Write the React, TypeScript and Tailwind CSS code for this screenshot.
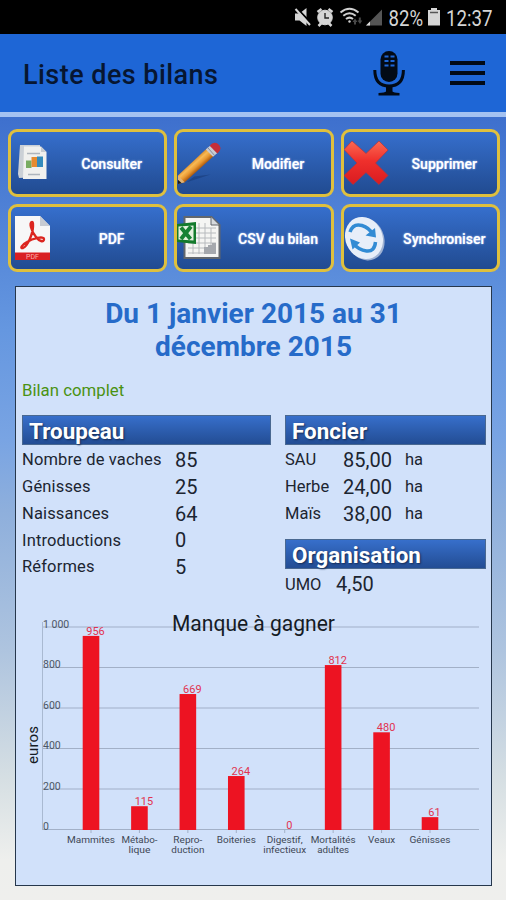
import type { ReactNode } from "react";

const herd = [
  { label: "Nombre de vaches", value: "85" },
  { label: "Génisses", value: "25" },
  { label: "Naissances", value: "64" },
  { label: "Introductions", value: "0" },
  { label: "Réformes", value: "5" },
];

const land = [
  { label: "SAU", value: "85,00" },
  { label: "Herbe", value: "24,00" },
  { label: "Maïs", value: "38,00" },
];

const losses = [
  { lines: ["Mammites"], widths: [48], value: 956 },
  { lines: ["Métabo-", "lique"], widths: [36, 22], value: 115 },
  { lines: ["Repro-", "duction"], widths: [29, 33], value: 669 },
  { lines: ["Boiteries"], widths: [39], value: 264 },
  { lines: ["Digestif,", "infectieux"], widths: [36, 43], value: 0 },
  { lines: ["Mortalités", "adultes"], widths: [45, 32], value: 812 },
  { lines: ["Veaux"], widths: [27], value: 480 },
  { lines: ["Génisses"], widths: [41], value: 61 },
];

const ticks = [1000, 800, 600, 400, 200, 0];

function StatusBar() {
  return (
    <div className="h-[34px] shrink-0 bg-black flex items-center justify-end">
      <svg width="212" height="34" viewBox="294 0 212 34">
        <path d="M295 13.500h4.500l7-5.500v18l-7-5.500H295z" fill="#d5d5d5" />
        <path d="M297 8.500l15 15.500" stroke="#000" strokeWidth="2" />
        <path d="M295.500 9l14.500 16" stroke="#d5d5d5" strokeWidth="2" />
        <g stroke="#d5d5d5" fill="none">
          <circle cx="325" cy="17.5" r="7.3" fill="#d5d5d5" />
          <path d="M317.500 12l4-3M332.500 12l-4-3M318.500 26l3-3M331.500 26l-3-3" strokeWidth="2.5" />
          <path d="M325 13v5h4" stroke="#222" strokeWidth="1.4" />
        </g>
        <g stroke="#d0d0d0" fill="none" strokeWidth="2">
          <path d="M340.500 12.500q9-7.500 18 0M343.300 15.800q6.200-5 12.400 0M346 19q3.500-2.800 7 0" />
          <circle cx="349.500" cy="21.500" r="1.200" fill="#d0d0d0" stroke="none" />
        </g>
        <path d="M352.500 22l2.500-3.500 2.500 3.500h-1.500v2.500h-2V22zM357.500 20.500h1.300V17.500h2v3h1.500L360 24z" fill="#484848" />
        <path d="M382 9.500V25.500H366z" fill="#555" />
        <path d="M370 21.500v4h-4z" fill="#ddd" />
        <text x="388.500" y="25.500" fontSize="22.5" fill="#d5d5d5" textLength="34.500" lengthAdjust="spacingAndGlyphs">
          82%
        </text>
        <path d="M431 8h6v2h3v15.500h-12V10h3z" fill="#d5d5d5" />
        <path d="M430 12.500h8" stroke="#555" strokeWidth="1.500" />
        <text x="446" y="25.500" fontSize="22.5" fill="#d5d5d5" textLength="46.500" lengthAdjust="spacingAndGlyphs">
          12:37
        </text>
      </svg>
    </div>
  );
}

function MicIcon() {
  return (
    <svg width="34" height="48" viewBox="0 0 34 48">
      <rect x="8.500" y="2" width="17" height="31" rx="8.500" fill="#020a16" />
      <path d="M12.500 7.500h4M18.500 7.500h4M12.500 12h4M18.500 12h4M12.500 16.500h4M18.500 16.500h4" stroke="#1e66d6" strokeWidth="1.800" />
      <path d="M2.800 21q0 16 14.300 16t14.300-16" fill="none" stroke="#020a16" strokeWidth="3" />
      <path d="M14 37h6.500v5.500q1 1 7 1.500v2.500h-21V44q6.500-.5 7.500-1.500z" fill="#020a16" />
    </svg>
  );
}

function ReportIcon() {
  return (
    <svg width="38" height="48" viewBox="0 0 38 48">
      <path d="M9 6h20v4l-3 28-18 1-1-4z" fill="#cbd0d6" />
      <path d="M13 7.500h17l5.500 5.500v27H12z" fill="#f0f0ee" />
      <path d="M30 7.500l5.500 5.500H30z" fill="#c7cbd0" />
      <path d="M16 14.500h13M17 35.500h12" stroke="#aeb5bd" strokeWidth="1.300" />
      <path d="M15 21.500h5.500V29H15z" fill="#78ac61" />
      <path d="M20.500 18h6v10h-6z" fill="#e68b30" />
      <path d="M26 17.500h6V28h-6z" fill="#348bbc" />
    </svg>
  );
}

function PencilIcon() {
  return (
    <svg width="50" height="50" viewBox="0 0 50 50">
      <defs>
        <linearGradient id="pencil" gradientUnits="userSpaceOnUse" x1="16" y1="22" x2="24" y2="31">
          <stop offset="0" stopColor="#d48325" />
          <stop offset=".35" stopColor="#f8ba55" />
          <stop offset=".65" stopColor="#e89832" />
          <stop offset="1" stopColor="#a9560c" />
        </linearGradient>
      </defs>
      <path d="M10 45l25-8-17 2z" fill="#173975" opacity=".55" />
      <path d="M1 38L31 10l7 8L8 45l-7 2z" fill="url(#pencil)" />
      <path d="M1 38l7 7-7 2z" fill="#dfb477" />
      <path d="M1 42.500l4 3.500-4 1z" fill="#17191f" />
      <path d="M30 11l5-4.500 7 8-4.500 4z" fill="#c9ccd2" />
      <path d="M32 9l7 8" stroke="#858a97" />
      <path d="M34 7q4-5 8.500-2 5 4 1 8.500L42 15z" fill="#c52e38" />
    </svg>
  );
}

function CrossIcon() {
  return (
    <svg width="46" height="48" viewBox="0 0 46 48">
      <defs>
        <linearGradient id="cross" x1="0" y1="0" x2="0" y2="1">
          <stop offset="0" stopColor="#fb6a53" />
          <stop offset=".45" stopColor="#ef302c" />
          <stop offset="1" stopColor="#d91b20" />
        </linearGradient>
      </defs>
      <path d="M8 2L22 14.500 35 2l9 9-12.500 13L44 36.500l-9 9L22 33.500 9 45.500l-9-9L13 24 0 10.500z" fill="url(#cross)" stroke="#b6343d" strokeWidth=".7" />
    </svg>
  );
}

function PdfIcon() {
  return (
    <svg width="37" height="46" viewBox="0 0 37 46">
      <path d="M1 1h25l10 10v34H1z" fill="#f7f7f7" />
      <path d="M26 1l10 10H26z" fill="#c7cbd2" />
      <path d="M1 37.500h35V45H1z" fill="#d92022" />
      <path d="M18 7c-3 0-1 9 4 15 3 4 8 6 8 2 0-3-11-1-17 3-6 3-7 7-4 6 5-2 10-15 10-22 0-3 0-4-1-4z" fill="none" stroke="#dc251f" strokeWidth="2.4" />
      <text x="18.500" y="43.800" textAnchor="middle" fontSize="7" fill="#fcb0ac">
        PDF
      </text>
    </svg>
  );
}

function ExcelIcon() {
  return (
    <svg width="46" height="46" viewBox="3 0 46 46">
      <path d="M10.500 2h27l8 8v33h-35z" fill="#f5f5f3" stroke="#62676d" strokeWidth="2" />
      <path d="M37 2v8h8" fill="#d7dadd" stroke="#62676d" />
      <path d="M14 13h28M14 18h28M14 23h28M14 28h28M14 33h28M14 38h28M19 8v31M25 8v31M31 8v31M37 13v26" stroke="#b7babd" />
      <path d="M30 39V32h4v-2h4v-2h4v11z" fill="#a5a8ad" />
      <path d="M3 9l19-2v22L3 27z" fill="#147a2d" />
      <path d="M4.500 11.500l15-1v15l-15-1z" fill="#e4f1df" />
      <path d="M7 12.500l9.500 11.500M17 11.500L7 24" stroke="#178235" strokeWidth="4" />
    </svg>
  );
}

function SyncIcon() {
  return (
    <svg width="42" height="46" viewBox="0 0 42 46">
      <ellipse cx="21.500" cy="24" rx="18.500" ry="22" transform="rotate(-24 21.500 24)" fill="#9fb2d3" />
      <ellipse cx="20" cy="23" rx="18.500" ry="21.500" transform="rotate(-24 20 23)" fill="#e7eef9" />
      <g fill="none" stroke="#328bd4" strokeWidth="3.500">
        <path d="M6 17q3-9 12-6.500 7 2 11 9" />
        <path d="M31.500 27q-1 10-9 9-8-1-13-7.500" />
      </g>
      <path d="M21.500 20.500l10.500 2-1-9.500zM16 27.500L6 23.500l2.500 11z" fill="#328bd4" />
    </svg>
  );
}

type ActionProps = {
  label: string;
  icon: ReactNode;
  labelClass: string;
};

function ActionButton({ label, icon, labelClass }: ActionProps) {
  return (
    <button className="h-[68px] min-w-0 rounded-[9px] border-[3px] border-[#dfc03e] bg-linear-to-b from-[#366fcd] to-[#214b91] flex items-center overflow-hidden text-white">
      <span className="w-[48px] shrink-0 flex">{icon}</span>
      <span className={`flex-1 pt-0.5 text-center whitespace-nowrap font-semibold text-[14px] [text-shadow:0_0_2px_#bdd3ff] ${labelClass}`}>
        {label}
      </span>
    </button>
  );
}

function SectionTitle({ children }: { children: ReactNode }) {
  return (
    <h3 className="h-[30px] border border-[#496891] bg-linear-to-b from-[#376fcb] to-[#234d94] pl-1.5 text-[22.4px] leading-[31px] font-bold text-white [text-shadow:1px_1px_2px_#142b54]">
      {children}
    </h3>
  );
}

function LossChart() {
  const baseY = 219.5;
  const scale = 0.2025;

  return (
    <svg width="475" height="275" viewBox="16 0 475 275" className="block">
      {ticks.map((tick) => (
        <g key={tick}>
          <path d={`M42 ${baseY - tick * scale}H479`} stroke="#a2b0c7" strokeWidth="1.2" />
          <text x="43" y={baseY - tick * scale + 0.5} fontSize="10.5" fill="#4c5665">
            {tick === 1000 ? "1 000" : tick}
          </text>
        </g>
      ))}
      <path d="M42.500 12V220" stroke="#a9b9d1" />
      <text x="172" y="21" fontSize="21.500" fill="#151b25" textLength="163" lengthAdjust="spacingAndGlyphs">
        Manque à gagner
      </text>
      <text transform="translate(37.500 154) rotate(-90)" fontSize="15" fill="#151b25" textLength="38">
        euros
      </text>
      {losses.map((loss, idx) => {
        const x = 91 + idx * 48.43;
        const top = baseY - loss.value * scale;
        return (
          <g key={loss.lines[0]}>
            <path d={`M${x} 219v4`} stroke="#a2b0c7" />
            {loss.value > 0 && (
              <rect x={x - 8.3} y={top} width="16.6" height={baseY + 0.5 - top} fill="#ed1322" />
            )}
            <text x={x + 4.5} y={top - 1} textAnchor="middle" fontSize="11" fill="#e13450">
              {loss.value}
            </text>
            {loss.lines.map((line, i) => (
              <text
                key={line}
                x={x}
                y={233 + i * 10}
                textAnchor="middle"
                fontSize="9.5"
                fill="#3f4856"
                textLength={loss.widths[i]}
                lengthAdjust="spacingAndGlyphs"
              >
                {line}
              </text>
            ))}
          </g>
        );
      })}
    </svg>
  );
}

export default function App() {
  return (
    <div className="w-[506px] h-[900px] overflow-hidden flex flex-col font-['Roboto',sans-serif] bg-[linear-gradient(180deg,#3d6fcd_112px,#6597e0_330px,#79a4e3_440px,#8eafdc_510px,#aec4df_650px,#d6dfe3_780px,#eeefed_860px,#efefed_900px)]">
      <StatusBar />
      <header className="h-[83px] shrink-0 bg-[#1e66d6] border-b-[5px] border-[#a4c2f1] flex items-center pl-[23px] pr-[21px]">
        <h1 className="flex-1 pt-1 text-[27px] leading-8 font-medium text-[#071631] tracking-[0.45px]">
          Liste des bilans
        </h1>
        <MicIcon />
        <button className="ml-11 w-[35px] flex flex-col gap-[6px]">
          <span className="h-[4px] bg-[#020a16]" />
          <span className="h-[4px] bg-[#020a16]" />
          <span className="h-[4px] bg-[#020a16]" />
        </button>
      </header>
      <div className="grid grid-cols-3 gap-[7px] mt-3 ml-2 mr-1.5">
        <ActionButton label="Consulter" icon={<ReportIcon />} labelClass="pr-0" />
        <ActionButton label="Modifier" icon={<PencilIcon />} labelClass="pr-0" />
        <ActionButton label="Supprimer" icon={<CrossIcon />} labelClass="pr-0" />
        <ActionButton label="PDF" icon={<span className="pl-[3px]"><PdfIcon /></span>} labelClass="pr-0" />
        <ActionButton label="CSV du bilan" icon={<ExcelIcon />} labelClass="pr-0" />
        <ActionButton label="Synchroniser" icon={<SyncIcon />} labelClass="pr-0" />
      </div>
      <main className="mt-[14px] ml-[15px] w-[477px] h-[600px] shrink-0 border border-[#26374c] bg-[#d1e1fa] flex flex-col">
        <h2 className="mt-2.5 text-center text-[28px] leading-[33px] font-bold text-[#266bc9]">
          Du 1 janvier 2015 au 31
          <br />
          décembre 2015
        </h2>
        <p className="mt-[15px] ml-1.5 text-[16.8px] leading-6 text-[#4a9212]">Bilan complet</p>
        <div className="mt-[13px] ml-1.5 mr-[5px] grid grid-cols-[249px_201px] gap-[14px] text-[#1c2531]">
          <section>
            <SectionTitle>Troupeau</SectionTitle>
            <div className="mt-[2px]">
              {herd.map((row) => (
                <div key={row.label} className="h-[26.7px] flex items-center">
                  <span className="w-[153px] pt-px text-[16.5px] tracking-[0.15px]">{row.label}</span>
                  <span className="text-[20px]">{row.value}</span>
                </div>
              ))}
            </div>
          </section>
          <section>
            <SectionTitle>Foncier</SectionTitle>
            <div className="mt-[2px] mb-[12px]">
              {land.map((row) => (
                <div key={row.label} className="h-[26.7px] flex items-center">
                  <span className="w-[58px] pt-px text-[16.5px]">{row.label}</span>
                  <span className="w-[62px] text-[20px]">{row.value}</span>
                  <span className="pt-px text-[16.5px]">ha</span>
                </div>
              ))}
            </div>
            <SectionTitle>Organisation</SectionTitle>
            <div className="mt-[2px] h-[26.7px] flex items-center">
              <span className="w-[51px] pt-px text-[16.5px]">UMO</span>
              <span className="text-[20px]">4,50</span>
            </div>
          </section>
        </div>
        <div className="mt-auto">
          <LossChart />
        </div>
      </main>
    </div>
  );
}
